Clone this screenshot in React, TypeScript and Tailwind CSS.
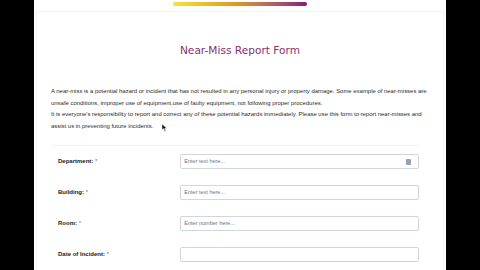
import React from "react";

const rows = [
  { label: "Department:", placeholder: "Enter text here...", icon: true },
  { label: "Building:", placeholder: "Enter text here..." },
  { label: "Room:", placeholder: "Enter number here..." },
  { label: "Date of Incident:", placeholder: "" },
];

export default function App() {
  return (
    <div className="w-[480px] h-[270px] bg-black flex justify-center overflow-hidden">
      <div className="w-[412px] h-full bg-white flex flex-col relative">
        {/* top bar */}
        <div className="h-[12px] flex justify-center items-start border-b border-gray-100 shrink-0">
          <div className="mt-[2px] w-[134px] h-[4px] rounded-full bg-gradient-to-r from-[#f4e53c] via-[#d9961f] to-[#8a1670]" />
        </div>

        <div className="flex-1 mx-[2px] border-x border-gray-100 px-[14px]">
          <h1
            className="mt-[31px] text-center text-[10.6px] leading-[14px] text-[#86306c]"
            style={{ fontFamily: '"DejaVu Sans", sans-serif' }}
          >
            Near-Miss Report Form
          </h1>

          <div
            className="mt-[29px] text-[5.95px] leading-[11.5px] text-[#2a2a2a] whitespace-nowrap"
            style={{ fontFamily: '"Liberation Sans", Arial, sans-serif' }}
          >
            <div>
              A near-miss is a potential hazard or incident that has not resulted in any personal injury or property damage. Some example of near-misses are
            </div>
            <div>
              unsafe conditions, improper use of equipment,use of faulty equipment, not following proper procedures.
            </div>
            <div>
              It is everyone's responsibility to report and correct any of these potential hazards immediately. Please use this form to report near-misses and
            </div>
            <div>assist us in preventing future incidents.</div>
          </div>

          <div
            className="mt-[13px] mr-[10px] border-t border-gray-100 pt-[8px] flex flex-col gap-[16px]"
            style={{ fontFamily: '"Liberation Sans", Arial, sans-serif' }}
          >
            {rows.map((r) => (
              <div key={r.label} className="flex items-center">
                <div className="w-[130px] pl-[7px] text-[6px] font-bold text-[#222]">
                  {r.label} <span className="font-normal text-gray-500">*</span>
                </div>
                <div className="w-[240px] h-[15px] border border-gray-300 rounded-[2px] flex items-center px-[3px] justify-between">
                  <span className="text-[5.5px] text-gray-500">{r.placeholder}</span>
                  {r.icon && <div className="w-[5px] h-[6px] rounded-[1px] bg-gray-400 mr-[4px]" />}
                </div>
              </div>
            ))}
          </div>
        </div>

        {/* mouse pointer */}
        <svg className="absolute left-[128px] top-[124px]" width="6" height="8" viewBox="0 0 6 8">
          <path d="M0 0 L0 6 L1.6 4.6 L2.8 7.4 L3.8 7 L2.7 4.3 L4.8 4.3 Z" fill="#111" stroke="#fff" strokeWidth="0.5" />
        </svg>
      </div>
    </div>
  );
}
